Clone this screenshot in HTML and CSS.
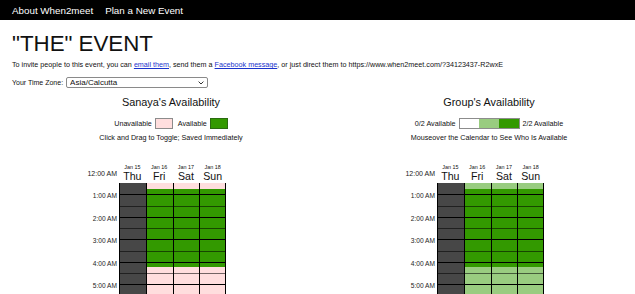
FILE: index.html
```html
<!DOCTYPE html>
<html lang="en">
<head>
<meta charset="utf-8">
<title>When2meet - "THE" EVENT</title>
<link rel="stylesheet" href="styles.css">
</head>
<body>
<nav class="topbar">
  <a class="nav-link" href="#">About When2meet</a>
  <a class="nav-link" href="#">Plan a New Event</a>
</nav>
<main class="page">
  <h1 class="title">"THE" EVENT</h1>
  <p class="invite">To invite people to this event, you can <a class="link" href="#">email them</a>, send them a <a class="link" href="#">Facebook message</a>, or just direct them to https://www.when2meet.com/?34123437-R2wxE</p>
  <div class="tz-row">
    <span class="tz-label">Your Time Zone:</span>
    <span class="tz-select-wrap">
      <select class="tz-select"><option>Asia/Calcutta</option></select>
      <svg class="tz-chevron" width="6" height="4" viewBox="0 0 6 4"><path d="M0.6 0.6 L3 3 L5.4 0.6" fill="none" stroke="#333" stroke-width="1"/></svg>
    </span>
  </div>
  <div class="panels">
    <section class="panel">
      <h2 class="panel-title">Sanaya's Availability</h2>
      <div class="legend">
        <span>Unavailable</span>
        <span class="swatch swatch-pink"></span>
        <span class="legend-gap">Available</span>
        <span class="swatch swatch-green"></span>
      </div>
      <div class="hint">Click and Drag to Toggle; Saved Immediately</div>
      <div class="grid" data-mode="mine"></div>
    </section>
    <section class="panel">
      <h2 class="panel-title">Group's Availability</h2>
      <div class="legend">
        <span>0/2 Available</span>
        <span class="scale"><span class="scale-seg seg-0"></span><span class="scale-seg seg-1"></span><span class="scale-seg seg-2"></span></span>
        <span>2/2 Available</span>
      </div>
      <div class="hint">Mouseover the Calendar to See Who Is Available</div>
      <div class="grid" data-mode="group"></div>
    </section>
  </div>
</main>
<script src="script.js"></script>
</body>
</html>
```

FILE: styles.css
```css
html, body {
  margin: 0;
  padding: 0;
  background: #fff;
  color: #111;
  font-family: "Liberation Sans", Arial, sans-serif;
  overflow: hidden;
}

.topbar {
  background: #000;
  height: 20px;
  display: flex;
  align-items: center;
  gap: 12px;
  padding: 1px 0 0 12px;
  box-sizing: border-box;
}

.nav-link {
  color: #fff;
  text-decoration: none;
  font-size: 9.8px;
  line-height: 12px;
}

.page {
  padding-left: 12px;
}

.title {
  margin: 11px 0 0;
  font-size: 22.3px;
  line-height: 26px;
  font-weight: normal;
}

.invite {
  margin: 3px 0 0;
  font-size: 7.2px;
  line-height: 10px;
}

.link {
  color: #1a33cc;
  text-decoration: underline;
}

.tz-row {
  margin-top: 7px;
  display: flex;
  align-items: center;
  gap: 3px;
  height: 11px;
  font-size: 7px;
}

.tz-select-wrap {
  position: relative;
  display: block;
  width: 142px;
  height: 11px;
}

.tz-select {
  -webkit-appearance: none;
  appearance: none;
  display: block;
  width: 142px;
  height: 11px;
  box-sizing: border-box;
  margin: 0;
  padding: 0 0 0 3px;
  border: 1px solid #8a8a8a;
  border-radius: 2px;
  background: #fff;
  font-family: "Liberation Sans", Arial, sans-serif;
  font-size: 8px;
  line-height: 9px;
  color: #111;
}

.tz-chevron {
  position: absolute;
  right: 4px;
  top: 4px;
}

.panels {
  display: flex;
  margin-top: 7px;
}

.panel {
  flex: 0 0 318px;
  width: 318px;
}

.panel-title {
  margin: 0;
  text-align: center;
  font-size: 10.9px;
  line-height: 14px;
  font-weight: normal;
}

.legend {
  margin-top: 9px;
  height: 11px;
  display: flex;
  justify-content: center;
  align-items: center;
  gap: 3px;
  font-size: 7.2px;
}

.legend-gap {
  margin-left: 2px;
}

.swatch {
  display: block;
  width: 18px;
  height: 11px;
  box-sizing: border-box;
  border: 1px solid #8c8c8c;
}

.swatch-pink { background: #ffdede; }
.swatch-green { background: #339900; border-color: #2a6b10; }

.scale {
  display: flex;
  width: 61px;
  height: 11px;
  box-sizing: border-box;
  border: 1px solid #8c8c8c;
}

.scale-seg { flex: 1; }
.seg-0 { background: #fff; }
.seg-1 { background: #99cc80; }
.seg-2 { background: #339900; }

.hint {
  margin-top: 4px;
  text-align: center;
  font-size: 7.2px;
  line-height: 10px;
}

.grid {
  margin-top: 20px;
  display: flex;
}

.times {
  width: 107px;
  flex: none;
  box-sizing: border-box;
  padding: 6.5px 2px 0 0;
  text-align: right;
}

.time {
  height: 22.5px;
  font-size: 6.6px;
  line-height: 8px;
  color: #222;
}

.time.first {
  font-size: 7px;
}

.day {
  width: 26.75px;
  flex: none;
}

.day-head {
  height: 20px;
  text-align: center;
  color: #111;
}

.date {
  padding-top: 1px;
  font-size: 5.4px;
  line-height: 7px;
}

.dow {
  font-size: 10.6px;
  line-height: 11px;
}

.slots {
  border-left: 1px solid #000;
}

.day:last-child .slots {
  border-right: 1px solid #000;
}

.slot {
  height: 5.625px;
  box-sizing: border-box;
}

.slot.hour { border-top: 1px solid #000; }
.slot.half { border-top: 1px solid rgba(0, 0, 0, 0.55); }

.c-off { background: #474747; }
.c-pink { background: #ffdede; }
.c-green { background: #339900; }
.c-light { background: #99cc80; }
```

FILE: script.js
```js
(function () {
  var days = [["Jan 15", "Thu"], ["Jan 16", "Fri"], ["Jan 17", "Sat"], ["Jan 18", "Sun"]];
  var times = ["12:00 AM", "1:00 AM", "2:00 AM", "3:00 AM", "4:00 AM", "5:00 AM"];
  var SLOTS = 20;

  function colorFor(mode, dayIndex, i) {
    if (dayIndex === 0) return "c-off";
    var on = i >= 1 && i <= 14;
    if (mode === "mine") return on ? "c-green" : "c-pink";
    return on ? "c-green" : "c-light";
  }

  document.querySelectorAll(".grid").forEach(function (grid) {
    var mode = grid.getAttribute("data-mode");
    var tcol = document.createElement("div");
    tcol.className = "times";
    times.forEach(function (t, k) {
      var d = document.createElement("div");
      d.className = "time" + (k === 0 ? " first" : "");
      d.textContent = t;
      tcol.appendChild(d);
    });
    grid.appendChild(tcol);

    days.forEach(function (day, di) {
      var col = document.createElement("div");
      col.className = "day";
      var head = document.createElement("div");
      head.className = "day-head";
      var date = document.createElement("div");
      date.className = "date";
      date.textContent = day[0];
      var dow = document.createElement("div");
      dow.className = "dow";
      dow.textContent = day[1];
      head.appendChild(date);
      head.appendChild(dow);
      col.appendChild(head);

      var slots = document.createElement("div");
      slots.className = "slots";
      for (var i = 0; i < SLOTS; i++) {
        var s = document.createElement("div");
        var line = "";
        if (i > 0) line = (i % 4 === 2) ? " hour" : (i % 4 === 0 ? " half" : "");
        s.className = "slot " + colorFor(mode, di, i) + line;
        slots.appendChild(s);
      }
      col.appendChild(slots);
      grid.appendChild(col);
    });
  });
})();
```
